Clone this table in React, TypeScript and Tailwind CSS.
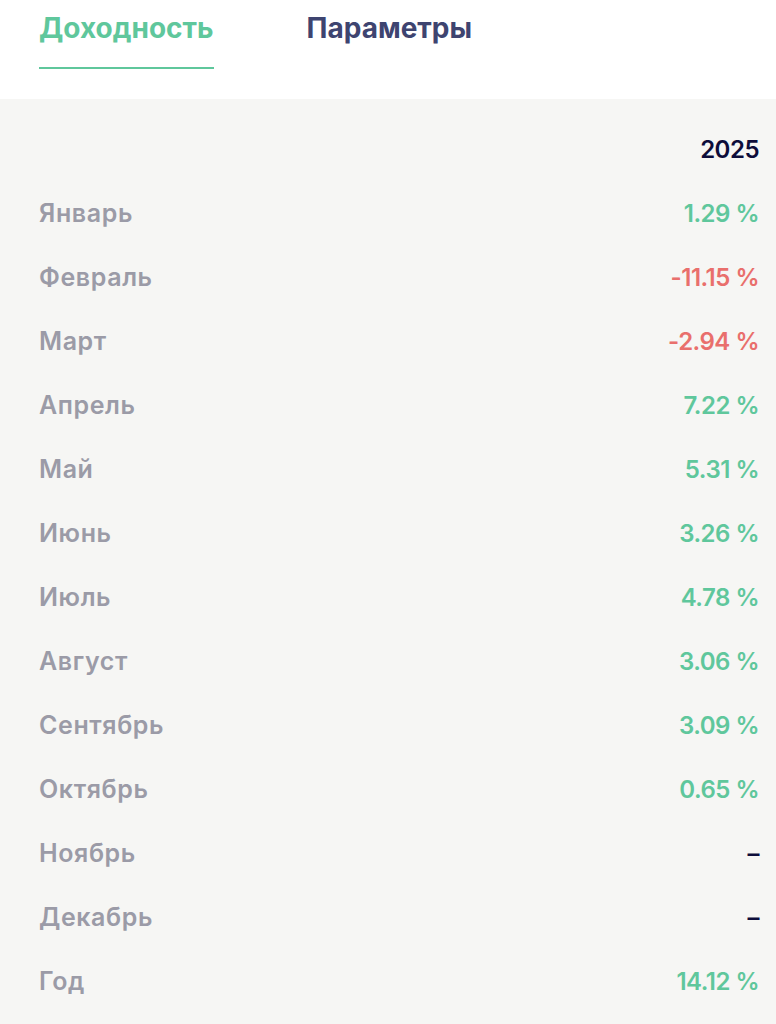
const ROWS: Array<{ month: string; value: string; tone: "up" | "down" | "none" }> = [
  { month: "Январь", value: "1.29 %", tone: "up" },
  { month: "Февраль", value: "-11.15 %", tone: "down" },
  { month: "Март", value: "-2.94 %", tone: "down" },
  { month: "Апрель", value: "7.22 %", tone: "up" },
  { month: "Май", value: "5.31 %", tone: "up" },
  { month: "Июнь", value: "3.26 %", tone: "up" },
  { month: "Июль", value: "4.78 %", tone: "up" },
  { month: "Август", value: "3.06 %", tone: "up" },
  { month: "Сентябрь", value: "3.09 %", tone: "up" },
  { month: "Октябрь", value: "0.65 %", tone: "up" },
  { month: "Ноябрь", value: "–", tone: "none" },
  { month: "Декабрь", value: "–", tone: "none" },
  { month: "Год", value: "14.12 %", tone: "up" },
];

const TONE: Record<string, string> = {
  up: "text-[#5fc79c]",
  down: "text-[#e96f6c]",
  none: "text-[#0d0d3b]",
};

export default function App() {
  return (
    <div className="w-[776px] h-[1024px] overflow-hidden bg-white font-['Inter','Liberation_Sans',sans-serif]">
      {/* Tabs */}
      <div className="h-[99px] pl-[39px] flex items-start gap-[93px]">
        <div className="flex flex-col">
          <span className="pt-[9px] text-[28px] leading-[38px] font-bold text-[#5fc79c]">Доходность</span>
          <div className="mt-[20px] h-[2px] bg-[#5fc79c]" />
        </div>
        <span className="pt-[9px] text-[28px] leading-[38px] font-bold text-[#3e4470]">Параметры</span>
      </div>

      {/* Table */}
      <div className="bg-[#f6f6f4] h-[925px] pl-[39px] pr-[17px] pt-[19px] text-[24px] font-semibold">
        <div className="h-[64px] flex items-center justify-end text-[#0d0d3b] tracking-[-0.5px]">2025</div>
        {ROWS.map((r) => (
          <div key={r.month} className="h-[64px] flex items-center justify-between">
            <span className="text-[#9b9ba7] text-[25px] tracking-[0.6px]">{r.month}</span>
            <span className={`${TONE[r.tone]} tracking-[-0.5px]`}>{r.value}</span>
          </div>
        ))}
      </div>
    </div>
  );
}
